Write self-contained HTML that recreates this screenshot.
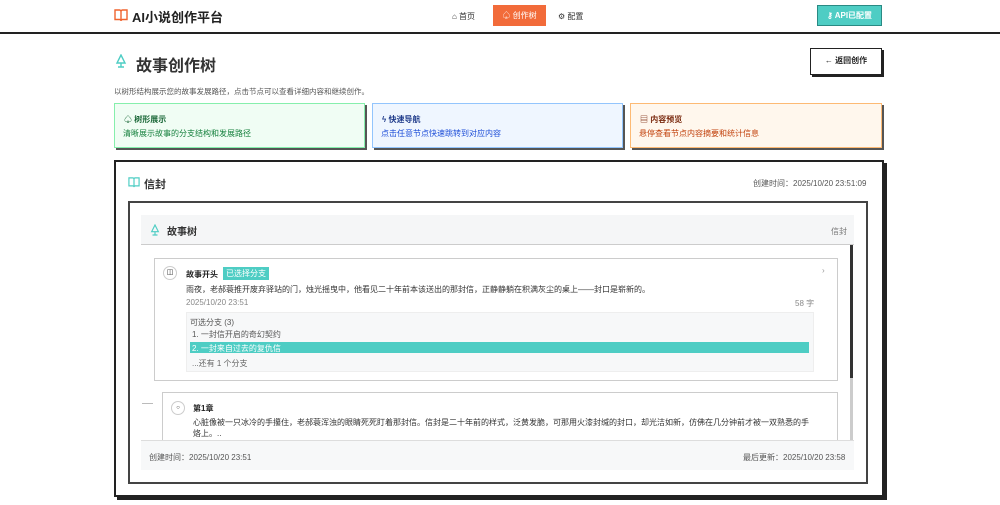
<!DOCTYPE html><html><head><meta charset="utf-8"><style>
*{box-sizing:border-box;margin:0;padding:0}
body{width:1000px;height:505px;overflow:hidden;background:#fff;font-family:"Liberation Sans","Noto Sans CJK SC",sans-serif;color:#222;position:relative}
.a{position:absolute}
.t{font-size:8px;white-space:nowrap}
</style></head><body>
<div class="a" style="left:0;top:0;width:1000px;height:34px;border-bottom:2px solid #222"></div>
<svg class="a" style="left:114px;top:9px" width="14" height="13" viewBox="0 0 14 13"><path d="M1 1h4.5a1.5 1.5 0 0 1 1.5 1.5V12a1.5 1.5 0 0 0-1.5-1.5H1zM13 1H8.5A1.5 1.5 0 0 0 7 2.5V12a1.5 1.5 0 0 1 1.5-1.5H13z" fill="none" stroke="#f0642f" stroke-width="1.4"/></svg>
<div class="a" style="left:132px;top:7px;font-size:13px;font-weight:bold;color:#222">AI小说创作平台</div>
<div class="a t" style="left:452px;top:11px;color:#333">⌂ 首页</div>
<div class="a" style="left:493px;top:5px;width:53px;height:21px;background:#f26b3a;color:#fff;font-size:8px;line-height:21px;text-align:center">♤ 创作树</div>
<div class="a t" style="left:558px;top:11px;color:#333">⚙ 配置</div>
<div class="a" style="left:817px;top:5px;width:65px;height:21px;background:#4ecdc4;border:1px solid #2a8a84;color:#fff;font-size:8px;line-height:19px;text-align:center;font-weight:bold">⚷ API已配置</div>
<svg class="a" style="left:115px;top:54px" width="12" height="14" viewBox="0 0 12 14"><path d="M6 1L2 9h8zM6 9v4M3 13h6" fill="none" stroke="#4ecdc4" stroke-width="1.4"/></svg>
<div class="a" style="left:136px;top:52px;font-size:16px;font-weight:bold;color:#333">故事创作树</div>
<div class="a" style="left:810px;top:48px;width:72px;height:27px;border:1.5px solid #222;box-shadow:2px 2px 0 #222;font-size:8px;line-height:24px;text-align:center;font-weight:bold">← 返回创作</div>
<div class="a t" style="left:114px;top:86px;color:#555;font-size:7.5px">以树形结构展示您的故事发展路径，点击节点可以查看详细内容和继续创作。</div>
<div class="a" style="left:114px;top:103px;width:251px;height:45px;background:#f0fdf4;border:1px solid #86efac;box-shadow:2px 2px 0 #555"></div>
<div class="a t" style="left:124px;top:114px;color:#166534;font-weight:bold">♤ 树形展示</div>
<div class="a t" style="left:123px;top:128px;color:#15803d">清晰展示故事的分支结构和发展路径</div>
<div class="a" style="left:372px;top:103px;width:251px;height:45px;background:#eff6ff;border:1px solid #93c5fd;box-shadow:2px 2px 0 #555"></div>
<div class="a t" style="left:382px;top:114px;color:#1e3a8a;font-weight:bold">ϟ 快速导航</div>
<div class="a t" style="left:381px;top:128px;color:#1d4ed8">点击任意节点快速跳转到对应内容</div>
<div class="a" style="left:630px;top:103px;width:252px;height:45px;background:#fff7ed;border:1px solid #fdba74;box-shadow:2px 2px 0 #555"></div>
<div class="a t" style="left:640px;top:114px;color:#7c2d12;font-weight:bold">▤ 内容预览</div>
<div class="a t" style="left:639px;top:128px;color:#c2410c">悬停查看节点内容摘要和统计信息</div>

<div class="a" style="left:114px;top:160px;width:770px;height:337px;border:2px solid #222;box-shadow:3px 3px 0 #222"></div>
<svg class="a" style="left:128px;top:177px" width="12" height="11" viewBox="0 0 14 13"><path d="M1 1h4.5a1.5 1.5 0 0 1 1.5 1.5V12a1.5 1.5 0 0 0-1.5-1.5H1zM13 1H8.5A1.5 1.5 0 0 0 7 2.5V12a1.5 1.5 0 0 1 1.5-1.5H13z" fill="none" stroke="#4ecdc4" stroke-width="1.4"/></svg>
<div class="a" style="left:144px;top:176px;font-size:11px;font-weight:bold;color:#333">信封</div>
<div class="a t" style="left:753px;top:178px;color:#555">创建时间：2025/10/20 23:51:09</div>
<div class="a" style="left:128px;top:201px;width:740px;height:283px;border:2px solid #444"></div>
<div class="a" style="left:141px;top:215px;width:713px;height:30px;background:#f5f6f7;border-bottom:1.5px solid #ccc"></div>
<svg class="a" style="left:150px;top:224px" width="10" height="12" viewBox="0 0 12 14"><path d="M6 1L2 9h8zM6 9v4M3 13h6" fill="none" stroke="#4ecdc4" stroke-width="1.4"/></svg>
<div class="a" style="left:167px;top:223px;font-size:10px;font-weight:bold;color:#333">故事树</div>
<div class="a t" style="left:831px;top:226px;color:#777">信封</div>
<div class="a" style="left:850px;top:245px;width:3px;height:133px;background:#333"></div>
<div class="a" style="left:850px;top:378px;width:3px;height:62px;background:#ccc"></div>
<div class="a" style="left:154px;top:258px;width:684px;height:123px;border:1.5px solid #ccc;background:#fff"></div>
<div class="a" style="left:163px;top:266px;width:14px;height:14px;border:1px solid #ccc;border-radius:50%;font-size:7px;line-height:12px;text-align:center">◫</div>
<div class="a t" style="left:186px;top:269px;font-weight:bold">故事开头</div>
<div class="a t" style="left:223px;top:267px;background:#4ecdc4;color:#fff;padding:1px 3px;font-size:8px">已选择分支</div>
<div class="a t" style="left:822px;top:266px;color:#999">›</div>
<div class="a t" style="left:186px;top:284px;color:#333">雨夜，老郝蓑推开废弃驿站的门，烛光摇曳中，他看见二十年前本该送出的那封信，正静静躺在积满灰尘的桌上——封口是崭新的。</div>
<div class="a t" style="left:186px;top:298px;color:#888">2025/10/20 23:51</div>
<div class="a t" style="left:795px;top:298px;color:#888">58 字</div>
<div class="a" style="left:186px;top:312px;width:628px;height:60px;background:#f7f8f9;border:1px solid #eee"></div>
<div class="a t" style="left:190px;top:317px;color:#555">可选分支 (3)</div>
<div class="a t" style="left:192px;top:329px;color:#555">1. 一封信开启的奇幻契约</div>
<div class="a" style="left:190px;top:342px;width:619px;height:11px;background:#4ecdc4"></div>
<div class="a t" style="left:192px;top:343px;color:#fff">2. 一封来自过去的复仇信</div>
<div class="a t" style="left:192px;top:358px;color:#666">...还有 1 个分支</div>
<div class="a" style="left:142px;top:403px;width:11px;height:1px;background:#bbb"></div>
<div class="a" style="left:162px;top:392px;width:676px;height:50px;border:1.5px solid #ccc;border-bottom:none"></div>
<div class="a" style="left:171px;top:401px;width:14px;height:14px;border:1px solid #ccc;border-radius:50%;font-size:6px;line-height:12px;text-align:center">○</div>
<div class="a t" style="left:193px;top:403px;font-weight:bold">第1章</div>
<div class="a t" style="left:193px;top:417px;color:#333">心脏像被一只冰冷的手攥住，老郝蓑浑浊的眼睛死死盯着那封信。信封是二十年前的样式，泛黄发脆，可那用火漆封缄的封口，却光洁如新，仿佛在几分钟前才被一双熟悉的手</div>
<div class="a t" style="left:193px;top:428px;color:#333">烙上。..</div>
<div class="a" style="left:141px;top:440px;width:713px;height:30px;background:#f7f8f9;border-top:1px solid #ddd"></div>
<div class="a t" style="left:149px;top:452px;color:#555">创建时间：2025/10/20 23:51</div>
<div class="a t" style="left:743px;top:452px;color:#555">最后更新：2025/10/20 23:58</div>
</body></html>
